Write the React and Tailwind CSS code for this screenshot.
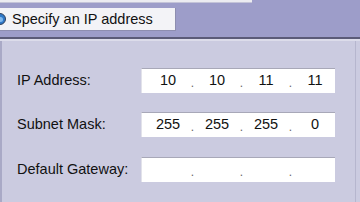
export default function App() {
  const rows = [
    { label: "IP Address:", parts: ["10", "10", "11", "11"], mt: "mt-[27px]" },
    { label: "Subnet Mask:", parts: ["255", "255", "255", "0"], mt: "mt-[19px]" },
    { label: "Default Gateway:", parts: ["", "", "", ""], mt: "mt-[20px]" },
  ];

  return (
    <div
      className="w-[360px] h-[202px] overflow-hidden bg-[#9d9dc9] flex flex-col text-[#111]"
      style={{ fontFamily: '"Liberation Sans", Arial, sans-serif' }}
    >
      {/* bottom edge of the option above */}
      <div className="w-[252px] h-[3px] shrink-0 bg-[#ececf1] border-b border-[#c4c4d8]" />

      {/* selected option */}
      <div className="mt-[5px] flex items-center h-[23px] w-[176px] shrink-0 bg-[#f3f3f7] border-r border-b border-[#8e8eb0]">
        <div className="-ml-[6px] w-[12px] h-[12px] rounded-full border border-[#33405a] bg-[#2f78c8] flex items-center justify-center">
          <div className="w-[5px] h-[5px] rounded-full bg-[#7fb8ee]" />
        </div>
        <span className="ml-[6px] text-[14.5px] leading-none">Specify an IP address</span>
      </div>

      <div className="mt-[6px] h-[2px] shrink-0 bg-[#5b5b78]" />
      <div className="h-[2px] shrink-0 bg-[#dcdcea]" />

      {/* panel */}
      <div className="flex-1 bg-[#cbcbe0] flex">
        <div className="flex-1 border-l-2 border-[#a9a9c6] mr-[4px] border-r border-r-[#b6b6ce] flex flex-col">
          {rows.map((r) => (
            <div key={r.label} className={`${r.mt} flex items-center h-[25px]`}>
              <div className="w-[139px] pl-[15px] text-[14.5px]">{r.label}</div>
              <div className="w-[194px] h-[25px] bg-white border-t border-t-[#a8a8b8] border-l border-l-[#e2e2ea] flex items-center pl-[5px] text-[14.5px]">
                {r.parts.map((p, i) => (
                  <div key={i} className="flex items-center">
                    <div className="w-[42px] text-center">{p}</div>
                    {i < 3 && (
                      <div className="w-[7px] text-center text-[#666] text-[12px] leading-none pt-[4px]">.</div>
                    )}
                  </div>
                ))}
              </div>
            </div>
          ))}
        </div>
      </div>
    </div>
  );
}
